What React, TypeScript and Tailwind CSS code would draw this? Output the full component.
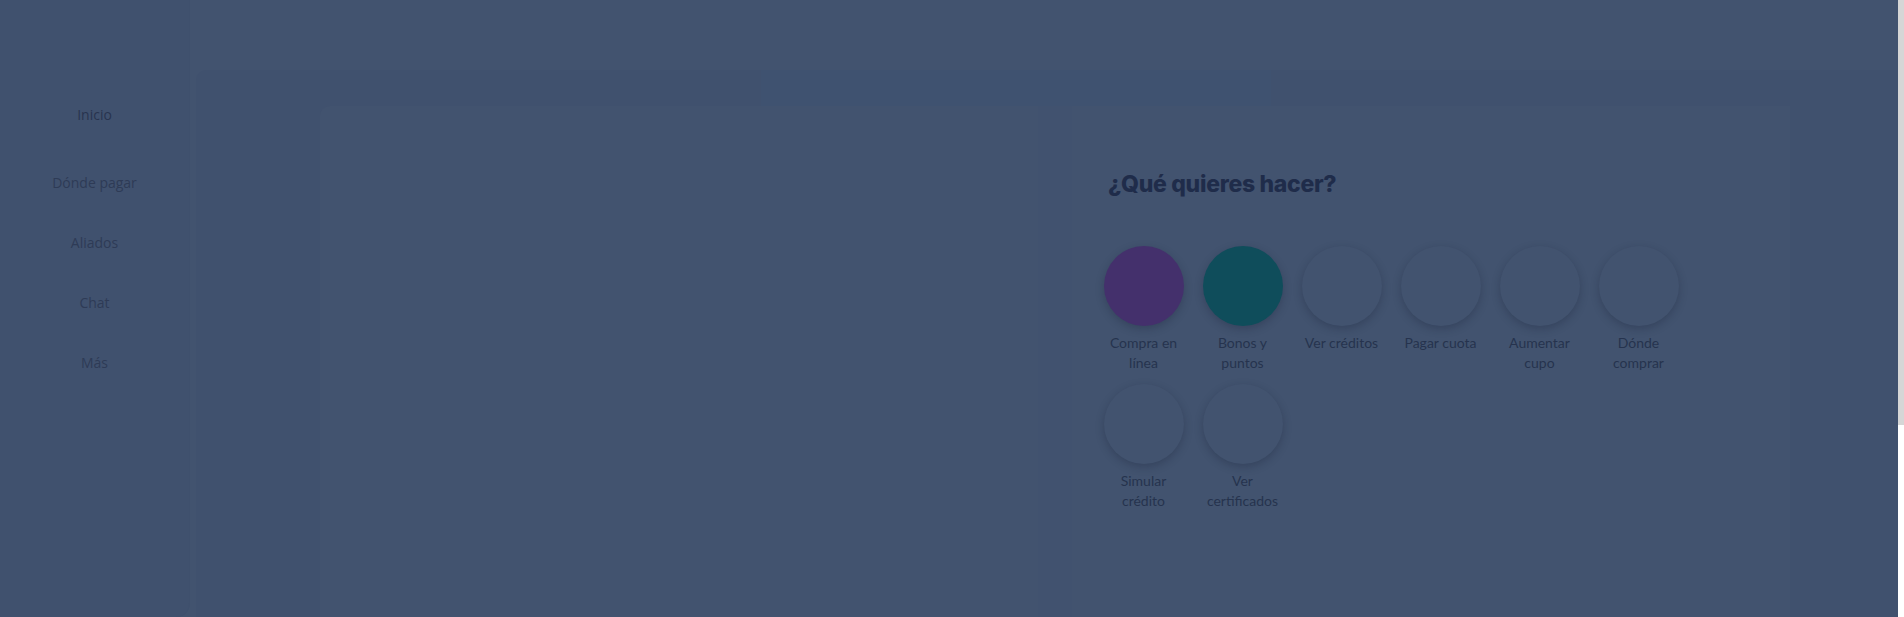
const navItems = [
  { label: "Inicio", active: true },
  { label: "Dónde pagar" },
  { label: "Aliados" },
  { label: "Chat" },
  { label: "Más" },
];

const actions = [
  { label: "Compra en línea", color: "bg-[#44306c]" },
  { label: "Bonos y puntos", color: "bg-[#0f4d5b]" },
  { label: "Ver créditos" },
  { label: "Pagar cuota" },
  { label: "Aumentar cupo" },
  { label: "Dónde comprar" },
  { label: "Simular crédito" },
  { label: "Ver certificados" },
];

export default function App() {
  return (
    <div className="flex h-[617px] w-[1904px] overflow-hidden bg-white">
      {/* Page under the backdrop */}
      <div className="flex w-[1898px] bg-[#42536f]">
        {/* Sidebar */}
        <aside className="flex h-full w-[190px] shrink-0 flex-col items-center rounded-br-[14px] border-r border-[#3f506d] bg-[#40516e] pt-[105px] font-['Open_Sans',sans-serif] text-[14px] leading-[20px]">
          {navItems.map((item, i) => (
            <div
              key={item.label}
              className={
                (item.active ? "text-[#28344f] " : "text-[#2e3b56] ") +
                (i === 0 ? "mb-[48px]" : "mb-[40px]")
              }
            >
              {item.label}
            </div>
          ))}
        </aside>

        {/* Main content */}
        <main className="flex flex-1 flex-col">
          <div className="h-[70px] shrink-0" />
          <div className="ml-[6px] flex flex-1 flex-col rounded-tl-[10px] bg-[#40516e]">
            {/* Banner strip */}
            <div className="flex h-[36px] shrink-0">
              <div className="w-[565px]" />
              <div className="w-[510px] bg-[#3f5270]" />
            </div>

            {/* Cards */}
            <div className="flex flex-1">
              <div className="w-[124px]" />
              <section className="w-[718px] rounded-tl-[10px] bg-[#42536f]" />
              <div className="w-[34px] bg-[#41526f]" />
              <section className="w-[718px] bg-[#42536f] pt-[62px]">
                <h2 className="pl-[36px] font-['Inter',sans-serif] text-[23px] font-extrabold leading-[32px] tracking-[-0.3px] text-[#1f2c4a]">
                  ¿Qué quieres hacer?
                </h2>
                <div className="mt-[46px] grid grid-cols-[repeat(6,99px)] gap-y-[11px] pl-[22px]">
                  {actions.map((a) => (
                    <div key={a.label} className="flex flex-col items-center">
                      <div
                        className={
                          "h-[80px] w-[80px] rounded-full shadow-[0_3px_9px_rgba(20,30,50,0.28)] " +
                          (a.color ?? "bg-[#42536f]")
                        }
                      />
                      <div className="mt-[7px] h-[40px] w-[86px] text-center font-['Lato',sans-serif] text-[14px] leading-[20px] text-[#26334e]">
                        {a.label}
                      </div>
                    </div>
                  ))}
                </div>
              </section>
            </div>
          </div>
        </main>
      </div>

      {/* Scrollbar edge */}
      <div className="flex w-[6px] flex-col">
        <div className="h-[425px] bg-[#d6d6d6]" />
        <div className="flex-1 bg-white" />
      </div>
    </div>
  );
}
